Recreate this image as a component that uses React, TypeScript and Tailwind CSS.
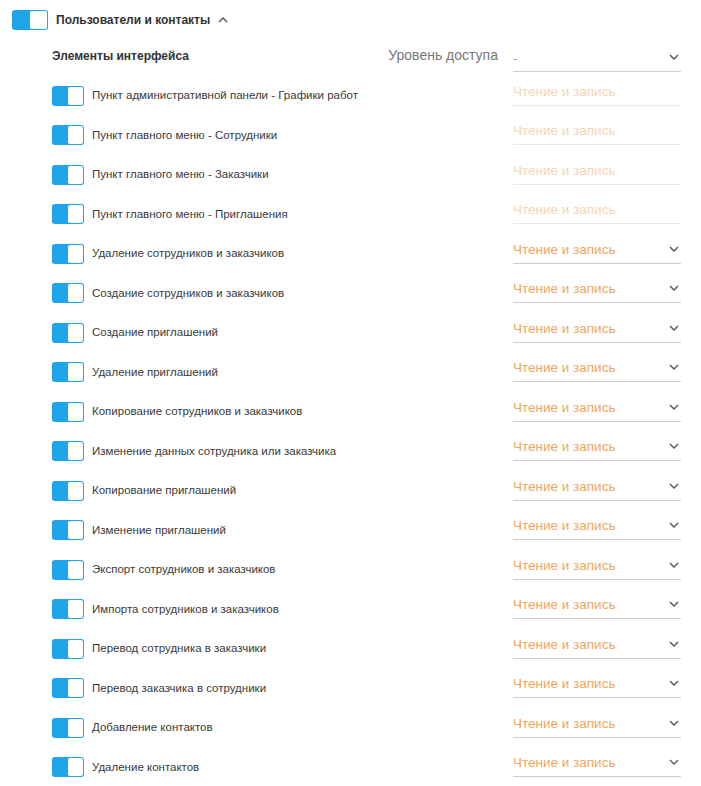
import React from "react";

const rows: { label: string; disabled?: boolean }[] = [
  { label: "Пункт административной панели - Графики работ", disabled: true },
  { label: "Пункт главного меню - Сотрудники", disabled: true },
  { label: "Пункт главного меню - Заказчики", disabled: true },
  { label: "Пункт главного меню - Приглашения", disabled: true },
  { label: "Удаление сотрудников и заказчиков" },
  { label: "Создание сотрудников и заказчиков" },
  { label: "Создание приглашений" },
  { label: "Удаление приглашений" },
  { label: "Копирование сотрудников и заказчиков" },
  { label: "Изменение данных сотрудника или заказчика" },
  { label: "Копирование приглашений" },
  { label: "Изменение приглашений" },
  { label: "Экспорт сотрудников и заказчиков" },
  { label: "Импорта сотрудников и заказчиков" },
  { label: "Перевод сотрудника в заказчики" },
  { label: "Перевод заказчика в сотрудники" },
  { label: "Добавление контактов" },
  { label: "Удаление контактов" },
];

function Chevron({ up = false }: { up?: boolean }) {
  return (
    <svg width="10" height="6" viewBox="0 0 10 6" className={up ? "rotate-180" : ""}>
      <path d="M1 1l4 4 4-4" fill="none" stroke="#555" strokeWidth="1.4" />
    </svg>
  );
}

function Toggle({ big = false }: { big?: boolean }) {
  return (
    <div
      className={`flex shrink-0 items-center justify-end rounded-[3px] bg-[#1ea5ea] p-[1px] ${
        big ? "h-[20px] w-[36px]" : "h-[20px] w-[32px]"
      }`}
    >
      <div className={`h-[18px] rounded-[2px] bg-white ${big ? "w-[17px]" : "w-[15px]"}`} />
    </div>
  );
}

export default function App() {
  return (
    <div
      className="min-h-[786px] w-[701px] bg-white text-[#333]"
      style={{ fontFamily: '"Liberation Sans", Arial, sans-serif' }}
    >
      <div className="flex h-[40px] items-center pl-[12px]">
        <Toggle big />
        <span className="ml-[8px] text-[12px] font-bold">Пользователи и контакты</span>
        <span className="ml-[8px] mt-[-1px]">
          <Chevron up />
        </span>
      </div>

      <div className="pl-[52px] pr-[20px]">
        <div className="flex h-[30px] items-center pt-[1px]">
          <span className="text-[12px] font-bold">Элементы интерфейса</span>
          <span className="ml-auto mr-[15px] text-[14px] text-[#777]">Уровень доступа</span>
          <div className="mt-[6px] flex h-[26px] w-[168px] items-center justify-between border-b border-[#cfcfcf]">
            <span className="mt-[2px] text-[13px] text-[#999]">-</span>
            <span className="mr-[2px] mt-[-3px]">
              <Chevron />
            </span>
          </div>
        </div>

        <div className="pt-[6px]">
          {rows.map((r) => (
            <div key={r.label} className="flex h-[39.5px] items-center">
              <Toggle />
              <span className="ml-[8px] text-[11.5px] text-[#3a3a3a]">{r.label}</span>
              <div
                className={`ml-auto mt-[-3px] flex h-[23px] w-[168px] items-start justify-between border-b ${
                  r.disabled ? "border-[#e8e8e8]" : "border-[#cdcdcd]"
                }`}
              >
                <span
                  className={`text-[13.5px] leading-[17px] ${
                    r.disabled ? "text-[#f8d5b3]" : "text-[#f2a55c]"
                  }`}
                >
                  Чтение и запись
                </span>
                {!r.disabled && (
                  <span className="mr-[2px] mt-[5px]">
                    <Chevron />
                  </span>
                )}
              </div>
            </div>
          ))}
        </div>
      </div>
    </div>
  );
}
